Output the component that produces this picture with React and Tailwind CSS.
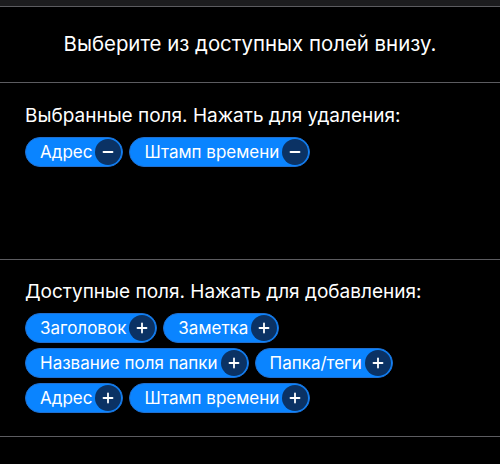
import React from 'react'

const selected = ['Адрес', 'Штамп времени']
const available = ['Заголовок', 'Заметка', 'Название поля папки', 'Папка/теги', 'Адрес', 'Штамп времени']

function Chip({ label, kind }) {
  return (
    <button className="flex items-center h-[30px] rounded-full bg-[#0a84ff] border border-[#1f6fd0] pl-[14px] pr-[1px] gap-[3px] text-white text-[17px] leading-none">
      <span>{label}</span>
      <span className="w-[26px] h-[26px] rounded-full bg-[#0b3264] flex items-center justify-center">
        <svg width="14" height="14" viewBox="0 0 14 14" fill="none" stroke="white" strokeWidth="1.8" strokeLinecap="round">
          <path d="M2.5 7h9" />
          {kind === 'add' && <path d="M7 2.5v9" />}
        </svg>
      </span>
    </button>
  )
}

export default function App() {
  return (
    <div className="w-[500px] h-[464px] bg-black text-white overflow-hidden" style={{ fontFamily: 'Inter, "Noto Sans", sans-serif' }}>
      <div className="h-[7px] bg-[#1c1c1e] border-b border-[#5c5c60]" />
      <div className="h-[76px] flex items-center justify-center border-b border-[#5c5c60] text-[20.4px]">
        Выберите из доступных полей внизу.
      </div>
      <div className="h-[177px] border-b border-[#5c5c60] px-[25px] pt-[22px]">
        <p className="text-[19px] leading-[22px] mb-[10px]">Выбранные поля. Нажать для удаления:</p>
        <div className="flex flex-wrap gap-[6px]">
          {selected.map((s) => (
            <Chip key={s} label={s} kind="remove" />
          ))}
        </div>
      </div>
      <div className="h-[177px] border-b border-[#5c5c60] px-[25px] pt-[21px]">
        <p className="text-[19px] leading-[22px] mb-[10px]">Доступные поля. Нажать для добавления:</p>
        <div className="flex flex-wrap gap-x-[6px] gap-y-[5px] w-[380px]">
          {available.map((s) => (
            <Chip key={s} label={s} kind="add" />
          ))}
        </div>
      </div>
    </div>
  )
}
